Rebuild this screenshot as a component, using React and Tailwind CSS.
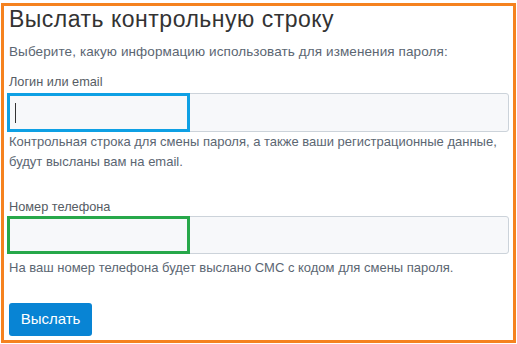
export default function App() {
  return (
    <div className="w-[517px] h-[344px] bg-white pt-[3px] pl-[1px] font-['Liberation_Sans',Arial,sans-serif]">
      <div className="w-[515px] h-[340px] border-[3px] border-[#f5821f] px-[3px]">
        <h1 className="text-[23px] leading-[26px] tracking-[0.5px] text-[#333] ml-[2px]">Выслать контрольную строку</h1>
        <p className="text-[13.5px] leading-[20px] tracking-[0.1px] text-[#5b6672] mt-[10px] ml-[2px]">
          Выберите, какую информацию использовать для изменения пароля:
        </p>

        {/* Login / email */}
        <label className="block text-[12.75px] leading-[18px] text-[#565c63] mt-[11px] ml-[2px]">Логин или email</label>
        <div className="relative mt-[2px] mr-[1px]">
          <div className="h-[39px] rounded-[3px] border border-[#ccd3da] bg-[#f7f8fa]"></div>
          <div className="absolute left-0 top-0 w-[183px] h-[39px] border-[3px] border-[#0ea0e4] flex items-center pl-[5px]">
            <div className="w-px h-[20px] bg-[#333]"></div>
          </div>
        </div>
        <p className="text-[13px] leading-[20px] text-[#5b6672] ml-[2px] whitespace-nowrap">
          Контрольная строка для смены пароля, а также ваши регистрационные данные,
          <br />
          будут высланы вам на email.
        </p>

        {/* Phone */}
        <label className="block text-[12.75px] leading-[18px] text-[#565c63] mt-[26px] ml-[2px]">Номер телефона</label>
        <div className="relative mr-[1px]">
          <div className="h-[38px] rounded-[3px] border border-[#ccd3da] bg-[#f7f8fa]"></div>
          <div className="absolute left-0 top-0 w-[183px] h-[38px] border-[3px] border-[#27a84a]"></div>
        </div>
        <p className="text-[13px] leading-[20px] text-[#5b6672] mt-[4px] ml-[2px]">
          На ваш номер телефона будет выслано СМС с кодом для смены пароля.
        </p>

        <button className="block mt-[25px] ml-[2px] w-[83px] h-[33px] rounded-[3px] bg-[#0884d4] text-white text-[15px]">
          Выслать
        </button>
      </div>
    </div>
  );
}
